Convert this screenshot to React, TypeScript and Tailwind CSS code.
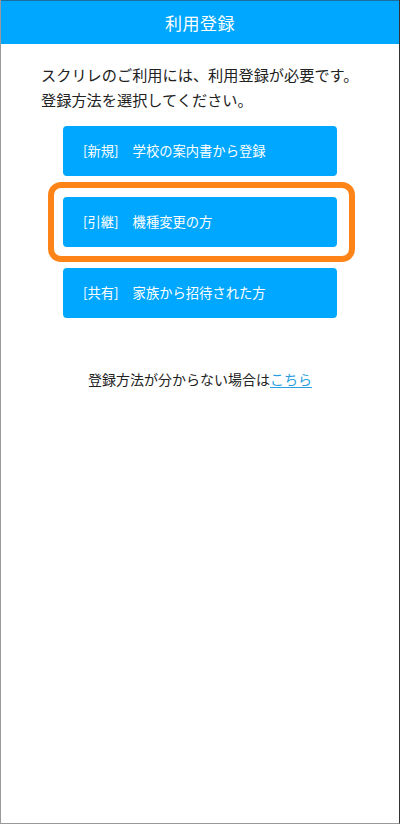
import React from 'react'

const options = [
  { tag: '[新規]', label: '学校の案内書から登録' },
  { tag: '[引継]', label: '機種変更の方' },
  { tag: '[共有]', label: '家族から招待された方' },
]

export default function App() {
  return (
    <div
      className="relative w-[400px] h-[824px] bg-white border-l border-l-[#9a9a9a] border-r border-r-[#333] border-b border-b-[#999] overflow-hidden"
      style={{ fontFamily: '"Noto Sans CJK JP", "Noto Sans", sans-serif' }}
    >
      {/* Header */}
      <div className="h-[44px] bg-[#00a7ff] border-t border-t-[#1b6fa0] flex items-center justify-center">
        <h1 className="text-[17px] text-white tracking-[0.5px]">利用登録</h1>
      </div>

      {/* Intro */}
      <div className="pt-[18px] pl-[40px] text-[15.2px] leading-[25px] text-[#222]">
        <p>スクリレのご利用には、利用登録が必要です。</p>
        <p>登録方法を選択してください。</p>
      </div>

      {/* Options */}
      <div className="mt-[14px] flex flex-col items-center gap-[21px]">
        {options.map((o) => (
          <button
            key={o.tag}
            className="w-[274px] h-[50px] rounded-[4px] bg-[#00a7ff] flex items-center gap-[14px] pl-[20px] text-white text-[13.3px]"
          >
            <span>{o.tag}</span>
            <span>{o.label}</span>
          </button>
        ))}
      </div>

      {/* Help */}
      <p className="mt-[50px] text-center text-[14px] leading-[22px] text-[#222]">
        登録方法が分からない場合は
        <a href="#" className="text-[#2a9fe0] underline underline-offset-2">
          こちら
        </a>
      </p>

      {/* Highlight annotation */}
      <div className="absolute left-[47px] top-[182px] w-[307px] h-[80px] rounded-[13px] border-[6px] border-[#ff8418] pointer-events-none" />
    </div>
  )
}
